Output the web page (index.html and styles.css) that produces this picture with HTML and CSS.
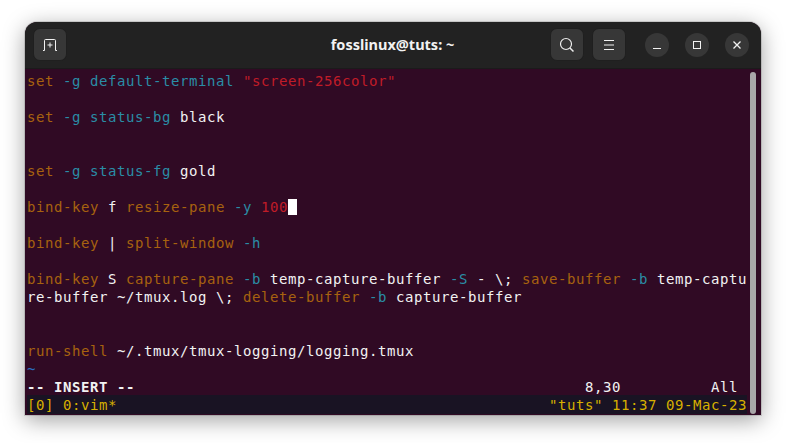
FILE: index.html
```html
<!DOCTYPE html>
<html lang="en">
<head>
<meta charset="utf-8">
<title>fosslinux@tuts: ~</title>
<link rel="stylesheet" href="styles.css">
</head>
<body>
<div class="window">
  <header class="titlebar">
    <button class="tb-btn new-tab" aria-label="New tab">
      <svg width="16" height="12" viewBox="0 0 16 12"><path d="M1 11.500h1.500V1.500q0-1 1-1h9q1 0 1 1v10H15M8 3.500v5M5.500 6h5" fill="none" stroke="#f2f2f2" stroke-width="1"/></svg>
    </button>
    <div class="title">fosslinux@tuts: ~</div>
    <button class="tb-btn search" aria-label="Search">
      <svg width="16" height="16" viewBox="0 0 16 16"><circle cx="7" cy="7" r="5.500" fill="none" stroke="#eee" stroke-width="1.200"/><path d="M11 11l3.500 3.500" stroke="#eee" stroke-width="1.500"/></svg>
    </button>
    <button class="tb-btn menu" aria-label="Menu">
      <svg width="12" height="10" viewBox="0 0 12 10"><path d="M1 .5h10M1 5h10M1 9.500h10" stroke="#f2f2f2" stroke-width="1"/></svg>
    </button>
    <div class="win-controls">
      <button class="ctl" aria-label="Minimize"><svg width="10" height="10" viewBox="0 0 10 10"><path d="M1 8.500h8" stroke="#f2f2f2" stroke-width="1"/></svg></button>
      <button class="ctl" aria-label="Maximize"><svg width="10" height="10" viewBox="0 0 10 10"><rect x="1.500" y="1.500" width="7" height="7" fill="none" stroke="#f2f2f2" stroke-width="1"/></svg></button>
      <button class="ctl" aria-label="Close"><svg width="10" height="10" viewBox="0 0 10 10"><path d="M1.500 1.500l7 7M8.500 1.500l-7 7" stroke="#f2f2f2" stroke-width="1.300"/></svg></button>
    </div>
  </header>
  <main class="term">
    <div class="screen">
      <div class="row"><span class="k">set</span> <span class="c">-g default-terminal</span> <span class="r">"screen-256color"</span></div>
      <div class="row"></div>
      <div class="row"><span class="k">set</span> <span class="c">-g status-bg</span> black</div>
      <div class="row"></div>
      <div class="row"></div>
      <div class="row"><span class="k">set</span> <span class="c">-g status-fg</span> gold</div>
      <div class="row"></div>
      <div class="row"><span class="k">bind-key</span> f <span class="k">resize-pane</span> <span class="c">-y</span> <span class="r">100</span><span class="cursor"> </span></div>
      <div class="row"></div>
      <div class="row"><span class="k">bind-key</span> | <span class="k">split-window</span> <span class="c">-h</span></div>
      <div class="row"></div>
      <div class="row"><span class="k">bind-key</span> S <span class="k">capture-pane</span> <span class="c">-b</span> temp-capture-buffer <span class="c">-S</span> - \; <span class="k">save-buffer</span> <span class="c">-b</span> temp-captu</div>
      <div class="row">re-buffer ~/tmux.log \; <span class="k">delete-buffer</span> <span class="c">-b</span> capture-buffer</div>
      <div class="row"></div>
      <div class="row"></div>
      <div class="row"><span class="k">run-shell</span> ~/.tmux/tmux-logging/logging.tmux</div>
      <div class="row tilde">~</div>
      <div class="row"><span class="mode">-- INSERT --</span>                                                  8,30          All</div>
      <div class="row status"><span>[0] 0:vim*</span><span>"tuts" 11:37 09-Mac-23</span></div>
    </div>
    <div class="scrollbar"></div>
  </main>
</div>
</body>
</html>
```
FILE: styles.css
```css
* { box-sizing: border-box; }
html, body { margin: 0; height: 100%; background: #fff; overflow: hidden; }
body { padding: 22px 25px 28px; }
.window {
  width: 736px;
  height: 393px;
  display: flex;
  flex-direction: column;
  border-radius: 12px 12px 0 0;
  overflow: hidden;
  box-shadow: 0 5px 22px rgba(0,0,0,.38), 0 0 0 1px rgba(0,0,0,.12);
  background: #300a24;
}
.titlebar {
  height: 47px;
  flex: none;
  display: flex;
  align-items: center;
  padding: 0 12px 1px 8px;
  background: #222222;
  border-bottom: 1px solid #1b1b1b;
}
.tb-btn {
  width: 34px;
  height: 33px;
  padding: 0;
  margin: 0;
  display: flex;
  align-items: center;
  justify-content: center;
  background: #373737;
  border: 1px solid #1f1f1f;
  border-radius: 7px;
}
.title {
  flex: 1;
  text-align: center;
  font: 700 14.500px/20px "Noto Sans", sans-serif;
  color: #f2f2f2;
  padding: 0 0 2px 168px;
}
.menu { margin-left: 8px; }
.win-controls { display: flex; gap: 16px; margin-left: 19px; }
.ctl {
  width: 24px;
  height: 24px;
  padding: 0;
  border: 0;
  border-radius: 50%;
  background: #373737;
  display: flex;
  align-items: center;
  justify-content: center;
}
.term {
  flex: 1;
  display: flex;
  padding: 3px 4px 1px 2px;
  background: #300a24;
  min-height: 0;
}
.screen {
  width: 720px;
  font: 14px/18px "DejaVu Sans Mono", monospace;
  letter-spacing: .57px;
  color: #f2f2f2;
}
.row { height: 18px; white-space: pre; }
.k { color: #a7620f; }
.c { color: #2a8da6; }
.r { color: #c01c28; }
.tilde { color: #2a6fc0; }
.mode { font-weight: 700; }
.cursor { background: #fff; }
.status {
  display: flex;
  justify-content: space-between;
  height: 19px;
  margin-top: -1px;
  padding-top: 1px;
  background: #191323;
  color: #d7b000;
}
.scrollbar {
  width: 6px;
  margin-left: 3px;
  border-radius: 3px;
  background: #a9a7a9;
}
```
